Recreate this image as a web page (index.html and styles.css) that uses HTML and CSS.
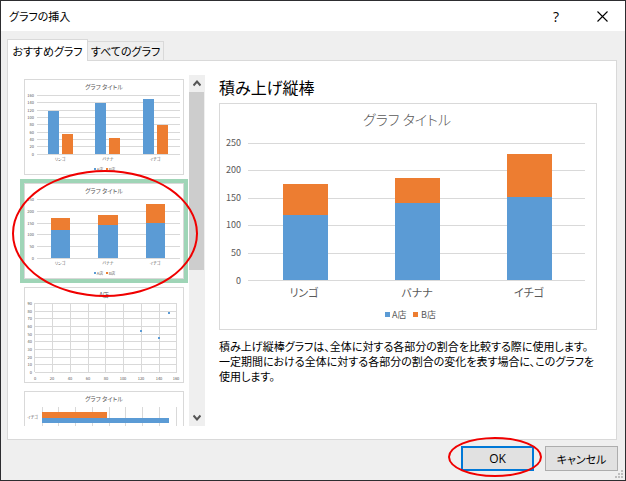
FILE: index.html
```html
<!DOCTYPE html>
<html lang="ja">
<head>
  <meta charset="UTF-8" />
  <meta name="viewport" content="width=device-width, initial-scale=1" />
  <title>グラフの挿入</title>
  <link rel="stylesheet" href="styles.css">
</head>
<body>
  <div class="dialog">
    <header class="titlebar">
      <h1 class="title">グラフの挿入</h1>
      <button class="caption-btn" aria-label="ヘルプ">?</button>
      <button class="caption-btn" aria-label="閉じる">
        <svg width="11" height="11" viewBox="0 0 11 11"><path d="M0.5 0.5L10.5 10.5M10.5 0.5L0.5 10.5" stroke="#000" stroke-width="1.1" fill="none"/></svg>
      </button>
    </header>

    <div class="tabs" role="tablist">
      <button class="tab active" role="tab" aria-selected="true">おすすめグラフ</button>
      <button class="tab" role="tab" aria-selected="false">すべてのグラフ</button>
    </div>

    <main class="panel">
      <div class="gallery">
        <div class="thumbs">
          <button class="thumb" aria-label="集合縦棒">
            <svg class="chart small" viewBox="0 0 160 96">
              <path class="grid" d="M13 16.5H156M13 23.5H156M13 31.5H156M13 38.5H156M13 45.5H156M13 53.5H156M13 60.5H156M13 67.5H156M13 75.5H156"/>
              <text class="heading" x="80" y="10">グラフ タイトル</text>
              <g class="value">
                <text x="10" y="18">160</text><text x="10" y="25">140</text><text x="10" y="33">120</text>
                <text x="10" y="40">100</text><text x="10" y="47">80</text><text x="10" y="55">60</text>
                <text x="10" y="62">40</text><text x="10" y="69">20</text><text x="10" y="77">0</text>
              </g>
              <g class="a">
                <rect x="24" y="32" width="11" height="43"/><rect x="71" y="24" width="11" height="51"/><rect x="119" y="20" width="11" height="55"/>
                <rect x="70" y="89" width="2" height="2"/>
              </g>
              <g class="b">
                <rect x="38" y="55" width="11" height="20"/><rect x="85" y="59" width="11" height="16"/><rect x="133" y="46" width="11" height="29"/>
                <rect x="82" y="89" width="2" height="2"/>
              </g>
              <g class="category">
                <text x="36" y="82">リンゴ</text><text x="84" y="82">バナナ</text><text x="131" y="82">イチゴ</text>
                <text x="76" y="92">A店</text><text x="88" y="92">B店</text>
              </g>
            </svg>
          </button>

          <button class="thumb selected" aria-label="積み上げ縦棒">
            <svg class="chart small" viewBox="0 0 160 96">
              <path class="grid" d="M13 16.5H156M13 28.5H156M13 40.5H156M13 51.5H156M13 63.5H156M13 75.5H156"/>
              <text class="heading" x="80" y="10">グラフ タイトル</text>
              <g class="value">
                <text x="10" y="18">250</text><text x="10" y="30">200</text><text x="10" y="42">150</text>
                <text x="10" y="53">100</text><text x="10" y="65">50</text><text x="10" y="77">0</text>
              </g>
              <g class="a">
                <rect x="27" y="47" width="19" height="28"/><rect x="74" y="42" width="20" height="33"/><rect x="122" y="40" width="19" height="35"/>
                <rect x="70" y="89" width="2" height="2"/>
              </g>
              <g class="b">
                <rect x="27" y="35" width="19" height="12"/><rect x="74" y="32" width="20" height="10"/><rect x="122" y="21" width="19" height="19"/>
                <rect x="82" y="89" width="2" height="2"/>
              </g>
              <g class="category">
                <text x="36" y="82">リンゴ</text><text x="84" y="82">バナナ</text><text x="131" y="82">イチゴ</text>
                <text x="76" y="92">A店</text><text x="88" y="92">B店</text>
              </g>
            </svg>
          </button>

          <button class="thumb" aria-label="散布図">
            <svg class="chart small" viewBox="0 0 160 96">
              <path class="grid" d="M11 16.5H152M11 24.5H152M11 31.5H152M11 39.5H152M11 47.5H152M11 54.5H152M11 62.5H152M11 70.5H152M11 77.5H152M11 85.5H152M10.500 16V85M28.500 16V85M46.500 16V85M64.500 16V85M81.500 16V85M99.500 16V85M117.500 16V85M135.500 16V85M152.500 16V86"/>
              <text class="heading" x="80" y="10">A店</text>
              <g class="value">
                <text x="8" y="18">90</text><text x="8" y="26">80</text><text x="8" y="33">70</text><text x="8" y="41">60</text><text x="8" y="49">50</text>
                <text x="8" y="56">40</text><text x="8" y="64">30</text><text x="8" y="72">20</text><text x="8" y="79">10</text><text x="8" y="87">0</text>
              </g>
              <g class="category">
                <text x="11" y="93">0</text><text x="28" y="93">20</text><text x="46" y="93">40</text><text x="64" y="93">60</text><text x="82" y="93">80</text>
                <text x="99" y="93">100</text><text x="117" y="93">120</text><text x="135" y="93">140</text><text x="152" y="93">160</text>
              </g>
              <g class="a">
                <rect x="116" y="43" width="2" height="2"/><rect x="134" y="50" width="2" height="2"/><rect x="144" y="25" width="2" height="2"/>
              </g>
            </svg>
          </button>

          <button class="thumb" aria-label="集合横棒">
            <svg class="chart small" viewBox="0 0 160 96">
              <path class="grid" d="M18.500 16V86M34.500 16V86M51.500 16V86M68.500 16V86M85.500 16V86M101.500 16V86M118.500 16V86M135.500 16V86M152.500 16V86"/>
              <text class="heading" x="80" y="10">グラフ タイトル</text>
              <g class="value"><text x="14" y="28">イチゴ</text></g>
              <rect class="b" x="18" y="21" width="65" height="6"/>
              <rect class="a" x="18" y="27" width="127" height="5"/>
            </svg>
          </button>
        </div>

        <div class="scrollbar">
          <button class="arrow" aria-label="上へ"><svg width="8" height="7" viewBox="0 0 8 7"><path d="M0.500 5.500L4 1.500L7.500 5.500" fill="none" stroke="#555" stroke-width="2"/></svg></button>
          <div class="track"><div class="handle"></div></div>
          <button class="arrow" aria-label="下へ"><svg width="8" height="7" viewBox="0 0 8 7"><path d="M0.500 1.500L4 5.500L7.500 1.500" fill="none" stroke="#555" stroke-width="2"/></svg></button>
        </div>
        <span class="ring ring-chart"></span>
      </div>

      <section class="preview">
        <h2 class="name">積み上げ縦棒</h2>
        <svg class="chart large" viewBox="-1 -1 378 227" role="img" aria-label="積み上げ縦棒グラフ">
          <path class="grid" d="M28 39.5H365M28 66.5H365M28 94.5H365M28 121.5H365M28 149.5H365M28 176.5H365"/>
          <text class="heading" x="187" y="21">グラフ タイトル</text>
          <g class="value">
            <text x="21" y="42">250</text><text x="21" y="69">200</text><text x="21" y="97">150</text>
            <text x="21" y="124">100</text><text x="21" y="152">50</text><text x="21" y="180">0</text>
          </g>
          <g class="a">
            <rect x="63" y="111" width="45" height="65"/><rect x="175" y="99" width="45" height="77"/><rect x="287" y="93" width="45" height="83"/>
            <rect x="165" y="208" width="5" height="5"/>
          </g>
          <g class="b">
            <rect x="63" y="80" width="45" height="31"/><rect x="175" y="74" width="45" height="25"/><rect x="287" y="50" width="45" height="43"/>
            <rect x="193" y="208" width="5" height="5"/>
          </g>
          <g class="category">
            <text x="84" y="193">リンゴ</text><text x="197" y="193">バナナ</text><text x="309" y="193">イチゴ</text>
          </g>
          <g class="legend">
            <text x="172" y="214">A店</text><text x="201" y="214">B店</text>
          </g>
        </svg>
        <p class="description">積み上げ縦棒グラフは、全体に対する各部分の割合を比較する際に使用します。<br>一定期間における全体に対する各部分の割合の変化を表す場合に、このグラフを<br>使用します。</p>
      </section>
    </main>

    <footer class="actions">
      <div class="ok-wrap">
        <button class="btn primary">OK</button>
        <span class="ring ring-ok"></span>
      </div>
      <button class="btn">キャンセル</button>
      <svg class="grip" width="8" height="8" viewBox="0 0 8 8" fill="#bfbfbf"><path d="M6 0h2v2H6zM3 3h2v2H3zM6 3h2v2H6zM0 6h2v2H0zM3 6h2v2H3zM6 6h2v2H6z"/></svg>
    </footer>
  </div>
</body>
</html>
```

FILE: styles.css
```css
* {
  box-sizing: border-box;
}
body {
  margin: 0;
  font-family: "Noto Sans CJK JP", sans-serif;
  font-size: 11px;
  font-feature-settings: "palt";
  color: #000;
}
button {
  font: inherit;
  font-feature-settings: inherit;
  color: inherit;
  padding: 0;
  border: none;
  background: none;
}
.dialog {
  display: flex;
  flex-direction: column;
  position: relative;
  height: 100vh;
  border: 1px solid #2d2d30;
  background: #efefef;
}

/* title bar */
.titlebar {
  display: flex;
  align-items: center;
  flex: none;
  height: 30px;
  padding-left: 8px;
  background: #fff;
}
.title {
  flex: 1;
  margin: 0;
  font-size: 11px;
  font-weight: normal;
}
.caption-btn {
  display: flex;
  align-items: center;
  justify-content: center;
  width: 46px;
  height: 30px;
  font-family: "Open Sans", sans-serif;
  font-size: 14px;
}

/* tabs */
.tabs {
  display: flex;
  align-items: flex-end;
  flex: none;
  height: 29px;
  padding-left: 6px;
}
.tab {
  height: 19px;
  width: 76px;
  line-height: 18px;
  border: 1px solid #d9d9d9;
  border-left: none;
  border-bottom: none;
  white-space: nowrap;
}
.tab.active {
  position: relative;
  z-index: 1;
  width: 81px;
  height: 22px;
  margin-bottom: -1px;
  border-left: 1px solid #d9d9d9;
  background: #fff;
}

/* tab page */
.panel {
  display: flex;
  gap: 14px;
  flex: 1;
  min-height: 0;
  margin: 0 8px 0 6px;
  padding: 14px 19px 13px 12px;
  border: 1px solid #d9d9d9;
  background: #fff;
}
.gallery {
  display: flex;
  flex: none;
  position: relative;
}
.thumbs {
  width: 169px;
  overflow: hidden;
}
.thumb {
  display: block;
  width: 168px;
  border: 4px solid transparent;
}
.thumb.selected {
  border-color: #9fd5b7;
}
.scrollbar {
  display: flex;
  flex-direction: column;
  width: 16px;
  background: #efefef;
}
.arrow {
  display: flex;
  align-items: center;
  justify-content: center;
  flex: none;
  height: 17px;
}
.track {
  flex: 1;
}
.handle {
  width: 15px;
  height: 56%;
  background: #cdcdcd;
}
.preview {
  flex: 1;
  min-width: 0;
}
.name {
  margin: 0 0 4px;
  font-size: 16px;
  line-height: 24px;
  font-weight: normal;
}
.description {
  margin: 9px 0 0;
  line-height: 15px;
}

/* charts */
.chart {
  display: block;
  width: 100%;
  outline: 1px solid #d9d9d9;
  outline-offset: -1px;
  background: #fff;
}
.chart text {
  fill: #595959;
  text-anchor: middle;
}
.chart .value text {
  text-anchor: end;
}
.chart .legend text {
  text-anchor: start;
}
.grid {
  fill: none;
  stroke: #d9d9d9;
}
.a {
  fill: #5b9bd5;
}
.b {
  fill: #ed7d31;
}
.small text {
  font-size: 4px;
}
.small .heading {
  font-size: 6px;
}
.large .heading {
  font-size: 14px;
  font-weight: 300;
}
.large .value,
.large .legend {
  font-size: 9px;
}
.large .category {
  font-size: 11px;
}

/* buttons */
.actions {
  display: flex;
  justify-content: flex-end;
  flex: none;
  gap: 11px;
  height: 40px;
  padding: 6px 7px 0 0;
}
.btn {
  width: 73px;
  height: 25px;
  border: 1px solid #adadad;
  background: #e1e1e1;
}
.btn.primary {
  border: 2px solid #0078d7;
  font-family: "Open Sans", sans-serif;
  font-size: 12px;
}
.ok-wrap {
  position: relative;
}
.grip {
  position: absolute;
  right: 2px;
  bottom: 2px;
}

/* red markers over the selected chart and the OK button */
.ring {
  position: absolute;
  border: 2px solid #f00000;
  border-radius: 50%;
  pointer-events: none;
}
.ring-chart {
  left: -8px;
  top: 95px;
  width: 186px;
  height: 127px;
}
.ring-ok {
  left: -13px;
  top: -9px;
  width: 94px;
  height: 40px;
}
```
